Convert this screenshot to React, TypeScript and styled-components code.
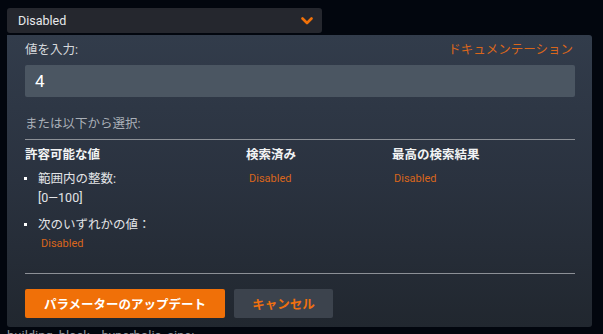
import styled, { createGlobalStyle } from 'styled-components';

const GlobalStyle = createGlobalStyle`
  html, body {
    margin: 0;
    padding: 0;
    background: #02060e;
    overflow: hidden;
  }
  body {
    font-family: Roboto, "Noto Sans CJK JP", sans-serif;
  }
`;

const Page = styled.div`
  width: 603px;
  height: 334px;
  padding: 8px 0 0 7px;
  box-sizing: border-box;
`;

const Select = styled.div`
  width: 315px;
  height: 25px;
  box-sizing: border-box;
  padding: 0 9px 0 11px;
  background: #25272e;
  border-radius: 3px;
  display: flex;
  align-items: center;
  justify-content: space-between;
  color: #e8e9eb;
  font-size: 12.5px;
`;

const Panel = styled.div`
  margin-top: 2px;
  width: 585px;
  height: 292px;
  box-sizing: border-box;
  padding: 5px 17px 0 18px;
  background: linear-gradient(180deg, #323c4b 0%, #2a323f 50%, #21272f 100%);
  border-radius: 0 3px 3px 3px;
  display: flex;
  flex-direction: column;
`;

const HeaderRow = styled.div`
  display: flex;
  justify-content: space-between;
  align-items: center;
  height: 16px;
  font-size: 12.5px;
  color: #d5d8dc;
`;

const DocLink = styled.a`
  color: #d9661c;
  text-decoration: none;
  margin-right: 2px;
`;

const ValueInput = styled.div`
  margin-top: 9px;
  height: 32px;
  background: #4b5662;
  border-radius: 2px;
  display: flex;
  align-items: center;
  padding-left: 10px;
  color: #ffffff;
  font-size: 17px;
`;

const Hint = styled.div`
  margin-top: 19px;
  height: 16px;
  line-height: 16px;
  font-size: 12.5px;
  color: #aab0b8;
`;

const Rule = styled.div<{ $top: number }>`
  margin-top: ${(p) => p.$top}px;
  height: 1px;
  background: #8c9096;
`;

const Table = styled.div`
  margin-top: 7px;
  display: grid;
  grid-template-columns: 221px 146px 1fr;
`;

const Head = styled.div`
  height: 16px;
  line-height: 16px;
  font-size: 12.5px;
  font-weight: 700;
  color: #f2f3f4;
`;

const Cell = styled.div`
  padding-top: 6px;
`;

const List = styled.ul`
  list-style: none;
  margin: 0;
  padding: 0;
`;

const Item = styled.li<{ $gap?: number }>`
  position: relative;
  padding-left: 13px;
  margin-top: ${(p) => p.$gap ?? 0}px;
  font-size: 12.5px;
  line-height: 19px;
  color: #e2e4e7;

  &::before {
    content: '';
    position: absolute;
    left: -1px;
    top: 8px;
    width: 3px;
    height: 3px;
    background: #ffffff;
  }
`;

const Disabled = styled.div<{ $indent?: number }>`
  padding-left: ${(p) => p.$indent ?? 3}px;
  font-size: 11px;
  line-height: 19px;
  color: #d9661c;
`;

const Buttons = styled.div`
  margin-top: 15px;
  display: flex;
  gap: 9px;
`;

const Button = styled.button<{ $primary?: boolean }>`
  height: 29px;
  width: ${(p) => (p.$primary ? 200 : 99)}px;
  border: none;
  border-radius: 2px;
  background: ${(p) => (p.$primary ? '#f07008' : '#3c434d')};
  color: ${(p) => (p.$primary ? '#ffffff' : '#ef7010')};
  font-family: Roboto, "Noto Sans CJK JP", sans-serif;
  font-size: 12.5px;
  font-weight: 700;
  padding: 0;
  cursor: pointer;
`;

const Below = styled.div`
  margin-top: 1px;
  font-size: 13px;
  line-height: 16px;
  color: #8d939b;
`;

const Chevron = () => (
  <svg width="12" height="8" viewBox="0 0 12 8">
    <polyline points="1.5,1.5 6,6 10.5,1.5" fill="none" stroke="#f07008" strokeWidth="2.6" strokeLinecap="round" strokeLinejoin="round" />
  </svg>
);

export default function App() {
  return (
    <Page>
      <GlobalStyle />
      <Select>
        <span>Disabled</span>
        <Chevron />
      </Select>
      <Panel>
        <HeaderRow>
          <span>値を入力:</span>
          <DocLink href="#">ドキュメンテーション</DocLink>
        </HeaderRow>
        <ValueInput>4</ValueInput>
        <Hint>または以下から選択:</Hint>
        <Rule $top={7} />
        <Table>
          <Head>許容可能な値</Head>
          <Head>検索済み</Head>
          <Head>最高の検索結果</Head>
          <Cell>
            <List>
              <Item>
                範囲内の整数:
                <br />
                [0—100]
              </Item>
              <Item $gap={8}>次のいずれかの値：</Item>
            </List>
            <Disabled $indent={16}>Disabled</Disabled>
          </Cell>
          <Cell>
            <Disabled>Disabled</Disabled>
          </Cell>
          <Cell>
            <Disabled $indent={2}>Disabled</Disabled>
          </Cell>
        </Table>
        <Rule $top={20} />
        <Buttons>
          <Button $primary>パラメーターのアップデート</Button>
          <Button>キャンセル</Button>
        </Buttons>
      </Panel>
      <Below>building_block__hyperbolic_sine:</Below>
    </Page>
  );
}
